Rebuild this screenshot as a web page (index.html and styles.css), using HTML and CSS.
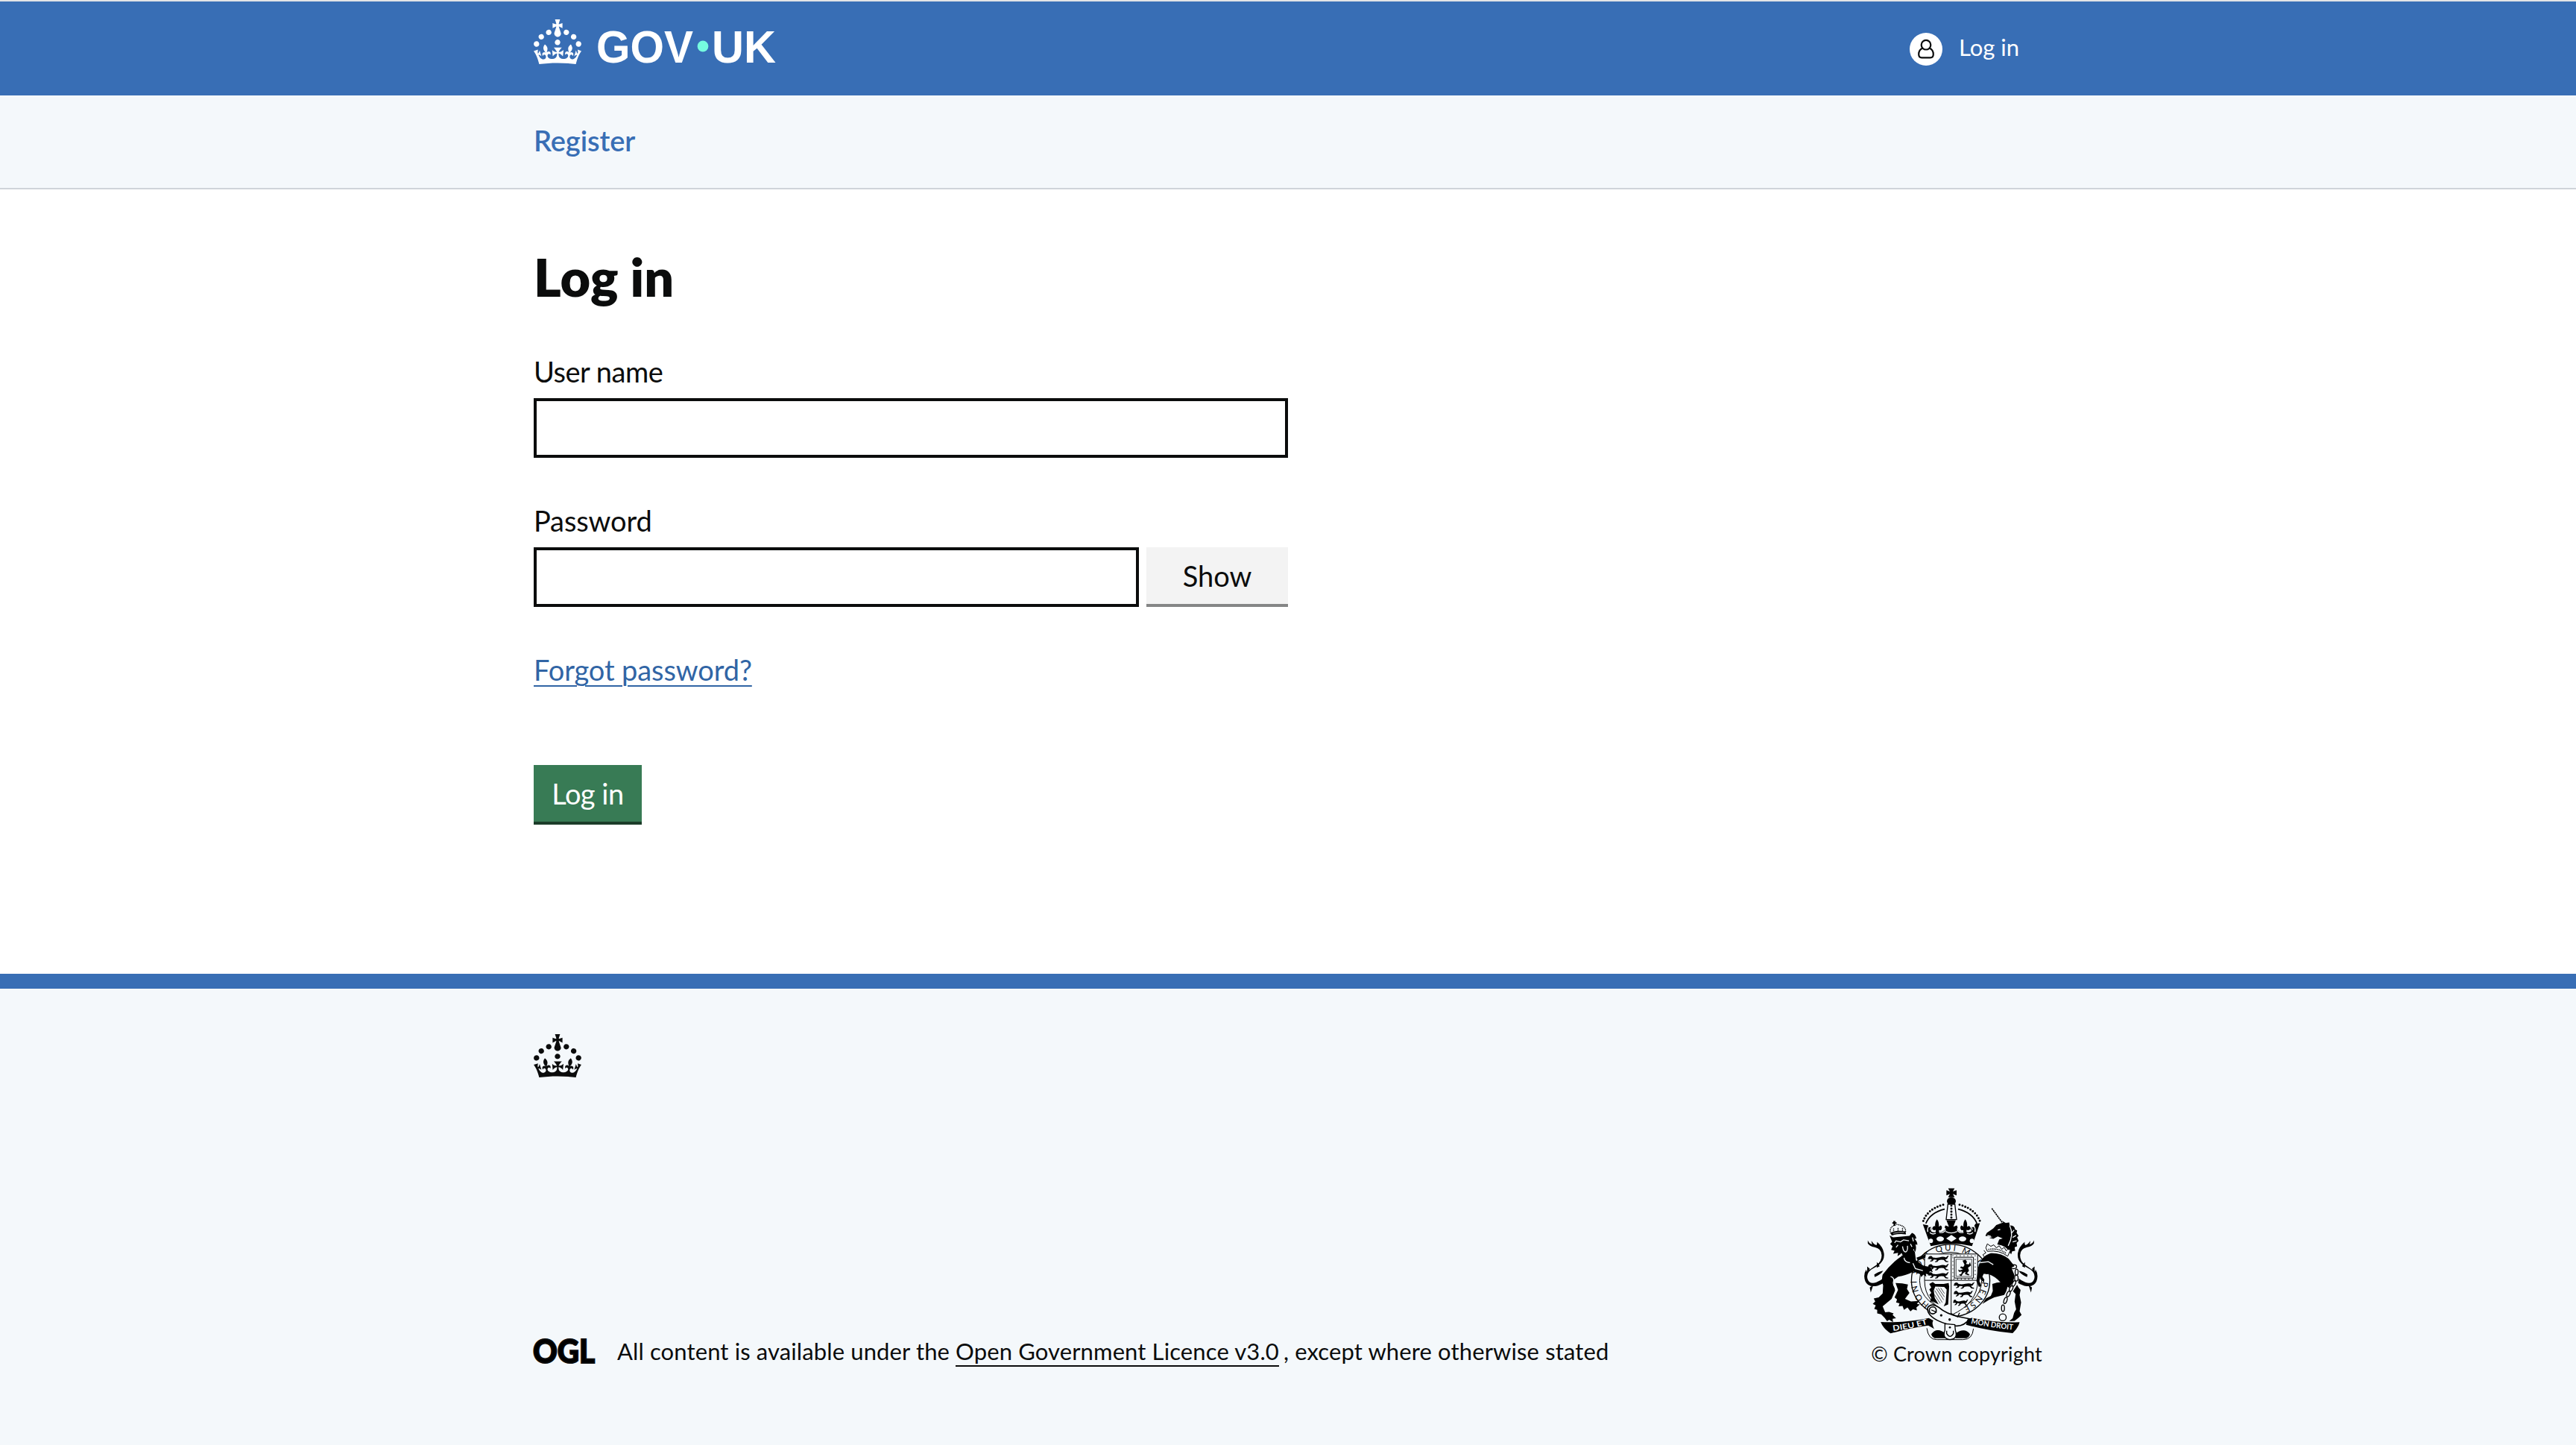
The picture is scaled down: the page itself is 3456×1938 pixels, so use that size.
FILE: index.html
```html
<!DOCTYPE html>
<html lang="en">
<head>
  <meta charset="UTF-8" />
  <meta name="viewport" content="width=device-width, initial-scale=1.0"/>
  <title>Log in - GOV.UK</title>
  <link rel="stylesheet" href="styles.css">
</head>
<body>
  <svg class="sprite" aria-hidden="true">
    <symbol id="crown" viewBox="0 0 32 30" preserveAspectRatio="none">
      <path d="M22.6 10.4c-1 .4-2-.1-2.4-1-.4-.9.1-2 1-2.4.9-.4 2 .1 2.4 1s-.1 2-1 2.4m-5.9 6.7c-.9.4-2-.1-2.4-1-.4-.9.1-2 1-2.4.9-.4 2 .1 2.4 1s-.1 2-1 2.4m10.8-3.7c-1 .4-2-.1-2.4-1-.4-.9.1-2 1-2.4.9-.4 2 .1 2.4 1s0 2-1 2.4m3.3 4.8c-1 .4-2-.1-2.4-1-.4-.9.1-2 1-2.4.9-.4 2 .1 2.4 1s-.1 2-1 2.4M17 4.7l2.3 1.2V2.5l-2.3.7-.2-.2.9-3h-3.4l.9 3-.2.2c-.1.1-2.3-.7-2.3-.7v3.4L15 4.7c.1.1.1.2.2.2l-1.3 4c-.1.2-.1.4-.1.6 0 1.1.8 2 1.9 2.2h.7c1-.2 1.9-1.1 1.9-2.1 0-.2 0-.4-.1-.6l-1.3-4c-.1-.2 0-.2.1-.3m-7.6 5.7c.9.4 2-.1 2.4-1 .4-.9-.1-2-1-2.4-.9-.4-2 .1-2.4 1s0 2 1 2.4m-5 3c.9.4 2-.1 2.4-1 .4-.9-.1-2-1-2.4-.9-.4-2 .1-2.4 1s.1 2 1 2.4m-3.2 4.8c.9.4 2-.1 2.4-1 .4-.9-.1-2-1-2.4-.9-.4-2 .1-2.4 1s0 2 1 2.4m14.8 11c4.4 0 8.6.3 12.3.8 1.1-4.5 2.4-7 3.7-8.8l-2.5-.9c.2 1.3.3 1.9 0 2.7-.4-.4-.8-1.1-1.1-2.3l-1.2 4c.7-.5 1.3-.8 2-.9-1.1 2.5-2.6 3.1-3.5 3-1.1-.2-1.7-1.2-1.5-2.1.3-1.2 1.5-1.5 2.1-.1 1.1-2.3-.8-3-2-2.3 1.9-1.9 2.1-3.5.6-5.6-2.1 1.6-2.1 3.2-1.2 5.5-1.2-1.4-3.2-.6-2.5 1.6.9-1.4 2.1-.5 1.9.8-.2 1.1-1.7 2.1-3.5 1.9-2.7-.2-2.9-2.1-2.9-3.6.7-.1 1.9.5 2.9 1.9l.4-4.3c-1.1 1.1-2.1 1.4-3.2 1.4.4-1.2 2.1-3 2.1-3h-5.4s1.7 1.9 2.1 3c-1.1 0-2.1-.2-3.2-1.4l.4 4.3c1-1.4 2.2-2 2.9-1.9-.1 1.5-.2 3.4-2.9 3.6-1.9.2-3.4-.8-3.5-1.9-.2-1.3 1-2.2 1.9-.8.7-2.3-1.2-3-2.5-1.6.9-2.2.9-3.9-1.2-5.5-1.5 2-1.3 3.7.6 5.6-1.2-.7-3.1 0-2 2.3.6-1.4 1.8-1.1 2.1.1.2.9-.3 1.9-1.5 2.1-.9.2-2.4-.5-3.5-3 .6 0 1.2.3 2 .9l-1.2-4c-.3 1.1-.7 1.9-1.1 2.3-.3-.8-.2-1.4 0-2.7l-2.9.9C1.3 23 2.6 25.5 3.7 30c3.7-.5 7.9-.8 12.3-.8"/>
    </symbol>
  </svg>

  <header class="header">
    <div class="container header-row">
      <a class="logo" href="#" aria-label="GOV.UK">
        <svg class="logo-crown"><use href="#crown"/></svg>
        <svg class="wordmark" viewBox="0 0 242 60">
          <text x="0" y="58" textLength="130" lengthAdjust="spacingAndGlyphs">GOV</text>
          <circle cx="143" cy="36" r="7.4"/>
          <text x="155" y="58" textLength="86" lengthAdjust="spacingAndGlyphs">UK</text>
        </svg>
      </a>
      <a class="account" href="#">
        <svg class="account-icon" viewBox="0 0 44 44">
          <circle class="disc" cx="22" cy="22" r="22"/>
          <path d="M17.5 20.5c-3.600 1.600-5.300 4.500-5.300 8.200 0 3 1.300 4.600 4 4.600h11.600c2.700 0 4-1.600 4-4.600 0-3.700-1.700-6.600-5.300-8.200"/>
          <circle class="head" cx="22" cy="16.200" r="6.300"/>
        </svg>
        <span class="account-text">Log in</span>
      </a>
    </div>
  </header>

  <nav class="nav">
    <div class="container">
      <a class="nav-link" href="#">Register</a>
    </div>
  </nav>

  <main class="container main">
    <h1 class="title">Log in</h1>
    <form class="login-form">
      <label class="label" for="username">User name</label>
      <input class="input" id="username" type="text">
      <label class="label" for="password">Password</label>
      <div class="password-row">
        <input class="input" id="password" type="password">
        <button class="btn btn-secondary" type="button">Show</button>
      </div>
      <p class="forgot"><a class="link" href="#">Forgot password?</a></p>
      <button class="btn btn-primary" type="button">Log in</button>
    </form>
  </main>

  <footer class="footer">
    <div class="container">
      <svg class="footer-crown"><use href="#crown"/></svg>
      <div class="footer-row">
        <div class="licence">
          <svg class="ogl" viewBox="0 0 82 34">
            <text x="-1" y="33" textLength="83" lengthAdjust="spacingAndGlyphs">OGL</text>
          </svg>
          <p class="licence-text">All content is available under the <a class="licence-link" href="#">Open Government Licence v3.0</a><span class="tail-text">, except where otherwise stated</span></p>
        </div>
        <a class="copyright" href="#">
          <svg class="crest" viewBox="87 70 702 616">
            <defs>
              <path id="ring" d="M352 540A132 121 0 1 1 440 565"/>
              <path id="motto-left" d="M206 647Q280 638 350 618"/>
              <path id="motto-right" d="M519 617Q600 634 692 643"/>
              <g id="passant">
                <path d="M4 6q6-8 14-4l4 5q14 3 28-1 14-4 26 1l4-6 3 3-3 8-8 3 6 6 6 1v4l-10-1-8-8q-12-2-20 1l-6 7-9 1v-3l6-2 1-5-12-1-4 6-10 3v-4l6-2-2-5-10 1z"/>
                <path class="line3" d="M78 8q8-4 6-8M2 12l6-2"/>
              </g>
              <g id="tail">
                <path d="M104 282q6 14 18 16-4-8-3-14 8 14 20 17 4-6 2-13 24 20 28 45 4 26-16 44-18 14-34 22-22 16-16 38 8 24 36 14 32-14 62-50l12 12q-38 44-70 52-38 8-49-18-10-26 4-48 0 6 3 10 2-18 0-22 8 8 9 14 14-10 30-21 20-13 20-38 0-26-28-32-22-4-28-16z"/>
                <path d="M130 420q12-10 36-16-8 14-34 26zM112 396l-10-8 4 22zM126 462l-10 30-4-20zM140 392q2-14 0-22 10 8 12 16z"/>
              </g>
            </defs>

            <!-- supporters' tails -->
            <use href="#tail"/>
            <use href="#tail" transform="matrix(-1 0 0 1 878 0)"/>

            <!-- garter -->
            <ellipse class="paper line4" cx="438" cy="444" rx="158" ry="146"/>
            <ellipse class="paper line3" cx="438" cy="444" rx="125" ry="114"/>
            <text class="garter-text"><textPath href="#ring" textLength="650">HONI SOIT QUI MAL Y PENSE</textPath></text>

            <!-- crown -->
            <path d="M428 72h26l-7 13 15-5v21l-15-6 7 13h-26l7-13-14 6V80l14 5z"/>
            <ellipse cx="441" cy="124" rx="18" ry="16"/>
            <path class="paper line4" d="M427 136h28l7 62h-42z"/>
            <path class="beads" d="M441 142v50"/>
            <path class="beads" d="M408 138Q340 158 326 210M474 138Q542 158 558 210"/>
            <path class="line5" d="M414 156Q356 170 338 214M468 156Q526 170 544 214"/>
            <path d="M326 217l20 4 6 8 8-1q4 8-2 16 10 9 20 4v-8q-10 4-14-4 0-10 10-12l2 3q-3-16 7-30 10 14 7 30l8-5q8 6 3 16-6 6-10 2v8q14 2 24-8-4-10 2-18l14 5-10-26h38l-10 26 14-5q6 8 2 18 10 10 24 8v-8q-4 4-10-2-5-10 3-16l8 5q-3-16 7-30 10 14 7 30l8-3q8 4 6 12-6 8-16 4v8q12 4 20-4-6-8-2-16l10 1 8-14 18-2-24 70-8 22q-82-20-166 0l-8-22z"/>
            <path class="cut" d="M350 224q-8 12-4 24M354 250q8 10 24 4M392 250q16 4 26-10M532 224q8 12 4 24M528 250q-8 10-24 4M490 250q-16 4-26-10M362 226l-6 14M520 226l6 14M406 224l12 14M476 224l-12 14"/>
            <path class="paper" d="M441 260l21 14-21 14-21-14z"/>
            <ellipse class="paper" cx="396" cy="276" rx="15" ry="10"/>
            <ellipse class="paper" cx="486" cy="276" rx="15" ry="10"/>
            <circle class="paper" cx="358" cy="284" r="9"/>
            <circle class="paper" cx="524" cy="284" r="9"/>
            <path class="cut" d="M418 246q22 12 46 0"/>

            <!-- shield -->
            <path class="paper line3" d="M333 337h214v108q0 90-106 138-108-48-108-138z"/>
            <path class="line3" d="M440 337v245M333 443h214"/>
            <use href="#passant" x="344" y="344"/>
            <use href="#passant" x="344" y="377"/>
            <use href="#passant" x="344" y="410"/>
            <path class="line3" d="M453 350h77v84h-77z"/>
            <path class="line2" d="M460 358h63v69h-63z"/>
            <path class="dots" d="M447 344h90v94h-90z"/>
            <path d="M486 364l12-4 6 8-4 9 12 2 4-10 4 14-12 9 4 12-8 10 10 6-4 3-14-5 2-10-9 6-8 12-10-5 10-4 3-10-12 2-4-9 8 3 12-5-12-6 4-5 9 2 5-9z"/>
            <use href="#passant" x="448" y="451"/>
            <use href="#passant" transform="translate(448 485) scale(.92 1)"/>
            <use href="#passant" transform="translate(446 520) scale(.72 1)"/>
            <path d="M352 458l14-8 10 8h34l20-4 2 14-4 72-18 8 8-16 4-52-10-10-36-2-6 16 4 30 16 26-24-12-12 2 6-16-8-12 8-8-8-14 8-8z"/>
            <path class="line2" d="M374 484l30 48M380 476l30 46M388 474l25 36M398 474l15 22M372 500l24 36"/>

            <!-- belt and buckle -->
            <path class="paper line5" d="M346 552q16-20 44 0 30 26 82 38l42 8q-24 34-62 28-70-14-96-42-14-16-10-32z"/>
            <circle class="paper line5" cx="366" cy="564" r="14"/>
            <circle cx="400" cy="584" r="5"/>
            <circle cx="434" cy="601" r="5"/>
            <path class="line4" d="M438 576l28 14 8-16M360 562l22 10"/>
            <path class="line3" d="M342 636q6 46 40 46h106q38 0 42-44"/>
            <path d="M360 660q18-24 42-12l16 8v20h-44q-12-4-14-16zM516 660q-16-22-42-12l-16 8v20h44q12-4 14-16z"/>
            <path class="paper line4" d="M415 618l40 4 2 22q12 36-22 38-32-4-20-38z"/>
            <path class="line4" d="M422 646v12q14 22 27 0v-12"/>
            <circle cx="435" cy="633" r="4"/>

            <!-- lion -->
            <path d="M192 262l14 8 66-6 10-12q14 4 18 22l-8 2q12 10 12 24l-8-2q6 16-2 32l-6-8q-2 16-12 24l-6-10-10 20-6-14-10 14-6-20-14 10 2-14-20 4 6-12-14-4 6-14-10-10 8-8z"/>
            <path class="cut" d="M216 284l20 4 12-8 22 4M244 306q4 26 14 22 8-4 6-24M226 300l-8 10M276 296l6 12M238 334l8 14M212 292l6-8M284 270l4 16M288 318l4 14"/>
            <path class="beads-fine" d="M196 252q-8-26 26-34 38 6 34 30M208 250v-16M244 248v-16M226 248v-18"/>
            <path d="M207 204h8v5h5v6h-5v8h-7v-8h-5v-6h4zM196 250q28-10 60-4l2 12q-30-4-58 4z"/>
            <path class="cut-fine" d="M206 254q24-6 44-4"/>
            <path d="M242 344q-44 30-78 76-6 20 2 44l-2 32-16 16-20 4 6 12-10 10 12 6-6 14 12 4v14l16 4 14 14 10 14 8-6 16 10-2-14 14-2-14-14 4-6-18-6-16 2-10-24 36-30 14-34-8-42 20-14q32-4 62-20l26 10 6 12 8-10 12 8-2-12 12 4 4-14 12 4-8-20-30-6-30-22-4-32-14-20-10 14z"/>
            <path d="M300 352l38-14-2 14-30 12z"/>
            <path d="M216 454q28 0 50 6l-4 18 10 16-18 24 24 10 34-2-10 12 12 2-14 12 2 12-16-4-10 8-12-16-14 10-6-16-16 2 4-12-14-4 4-12-10-8 14-30z"/>
            <path class="cut" d="M196 428q16 4 12 20-4 10 6 24M286 374l10 22 30 8M250 352q2 18 24 20"/>

            <!-- unicorn -->
            <path class="horn" d="M604 153l42 57"/>
            <path d="M578 264l6-12 26-18 12-14 28-10-6-8 16 10 14-2 2 12q20 0 22 16l8 4-2 10 8 12-6 6 6 14-8 8 2 14-10 4 2 14-12 2-4 12-10-12q-8-22-46-28l8-20 14-4-20-8-18 10-16-4 14-4z"/>
            <path class="cut" d="M676 222q18 38-6 82M694 240l-10 12M702 262l-14 8M704 284l-16 4M628 240l10-2M586 262l14 4"/>
            <path class="paper line3" d="M586 296l-6 16 6 14q50-6 82 20l12-26-12-2-6 6-8-14-10 8-10-14-12 8-10-12-12 6z"/>
            <path class="beads-fine" d="M592 318q40-6 72 18"/>
            <path d="M548 396q10-50 52-62 40-2 72 22l22 28q12 22 6 56 2 22 20 42l-4 20 6 30-6 36 8 14-10 10-18 14-22 2 14-12 6-22 8-14-6-32 4-30-22-22-38-24q-24-26-50-34l-30-2-6 30 8 20-10 4-10-24z"/>
            <path d="M560 384l-10 30 8 24 14 14 2-12-8-12 8-18 20-18zM606 458q30-14 66-4l-10 34-8 14-40 10-22 10-26 16 14-22 20-10 8-20z"/>
            <path class="cut" d="M556 372l34-4 20 12M566 350l10-8"/>
            <path class="line3" d="M572 322l8 10-12 8 10 14"/>
            <g class="chain-gap">
              <path d="M692 388l14 34-6 30-30 46-20 50v24"/>
            </g>
            <g class="chain">
              <ellipse cx="692" cy="388" rx="12" ry="8"/>
              <ellipse cx="704" cy="410" rx="6" ry="12"/>
              <ellipse cx="703" cy="434" rx="7" ry="12"/>
              <ellipse cx="693" cy="456" rx="6" ry="12" transform="rotate(25 693 456)"/>
              <ellipse cx="682" cy="476" rx="6" ry="12" transform="rotate(25 682 476)"/>
              <ellipse cx="671" cy="498" rx="6" ry="12" transform="rotate(25 671 498)"/>
              <ellipse cx="659" cy="524" rx="6" ry="13" transform="rotate(20 659 524)"/>
              <ellipse cx="649" cy="555" rx="6" ry="13"/>
              <circle cx="648" cy="592" r="14"/>
            </g>

            <!-- motto scroll -->
            <path d="M156 611q100 4 194-16l18 10q-8 12 4 34l-24-14q-72 10-152 32-30-20-40-46z"/>
            <path d="M522 594q96 20 194 18-6 24-28 44-90-8-188-34l6-22z"/>
            <text class="motto"><textPath href="#motto-left" textLength="142" lengthAdjust="spacingAndGlyphs">DIEU ET</textPath></text>
            <text class="motto"><textPath href="#motto-right" textLength="172" lengthAdjust="spacingAndGlyphs">MON DROIT</textPath></text>
          </svg>
          <span class="copyright-text">© Crown copyright</span>
        </a>
      </div>
    </div>
  </footer>
</body>
</html>
```
FILE: styles.css
```css
* {
  box-sizing: border-box;
}

body {
  margin: 0;
  min-height: 1938px;
  display: flex;
  flex-direction: column;
  font-family: Lato, "Noto Sans", sans-serif;
  font-size: 38px;
  color: #0b0c0c;
  background: #fff;
}

a {
  color: inherit;
  text-decoration: none;
}

.sprite {
  position: absolute;
  width: 0;
  height: 0;
}

.container {
  width: 2024px;
  margin: 0 auto;
}

/* header */
.header {
  height: 128px;
  border-top: 2px solid #e2e4e6;
  background: #386eb5;
  color: #fff;
}

.header-row {
  display: flex;
  justify-content: space-between;
  padding-right: 31px;
}

.logo {
  display: flex;
  gap: 20px;
  padding-top: 24px;
}

.logo-crown {
  width: 64px;
  height: 60px;
  fill: #fff;
}

.wordmark {
  width: 242px;
  height: 60px;
  overflow: visible;
  fill: #fff;
  font-family: "Liberation Sans", Arial, sans-serif;
  font-size: 62px;
  font-weight: bold;
}

.wordmark circle {
  fill: #76fbe0;
}

.account {
  display: flex;
  gap: 22px;
  padding-top: 42px;
  font-size: 31px;
}

.account-icon {
  width: 44px;
  height: 44px;
  fill: #fff;
  stroke: #0b0c0c;
  stroke-width: 2.2;
}

.account-icon .disc {
  stroke: none;
}

.account-text {
  line-height: 38px;
}

/* navigation */
.nav {
  height: 126px;
  border-bottom: 2px solid #cfd4d9;
  background: #f4f8fb;
}

.nav-link {
  color: #386eb5;
  font-weight: 600;
  line-height: 121px;
  letter-spacing: -0.1px;
}

/* form */
.main {
  padding-top: 77px;
}

.title {
  margin: 0 0 62px;
  font-size: 70px;
  font-weight: 800;
  line-height: 80px;
}

.login-form {
  width: 1012px;
}

.label {
  display: block;
  margin-bottom: 11px;
  line-height: 50px;
  letter-spacing: -0.5px;
}

.input {
  display: block;
  width: 100%;
  height: 80px;
  margin: 0 0 59px;
  padding: 10px;
  border: 4px solid #0b0c0c;
  border-radius: 0;
  background: #fff;
  font: inherit;
}

.input + .label {
  letter-spacing: -0.1px;
}

.password-row {
  display: flex;
  gap: 10px;
  margin-bottom: 59px;
}

.password-row .input {
  flex: 1;
  margin: 0;
}

.btn {
  height: 80px;
  padding: 0;
  border: 0;
  border-bottom: 4px solid;
  font: inherit;
}

.btn-secondary {
  width: 190px;
  border-color: #858686;
  background: #f3f3f3;
  color: #0b0c0c;
}

.btn-primary {
  width: 145px;
  border-color: #1c3d2a;
  background: #387b55;
  color: #fff;
  letter-spacing: -0.5px;
}

.forgot {
  margin: 0 0 103px;
  line-height: 50px;
  letter-spacing: -0.1px;
}

.link {
  color: #3165a5;
  text-decoration: underline;
  text-decoration-thickness: 2px;
  text-underline-offset: 6px;
}

/* footer */
.footer {
  flex: 1;
  margin-top: 200px;
  padding-top: 61px;
  border-top: 20px solid #386eb5;
  background: #f4f8fb;
}

.footer-crown {
  display: block;
  width: 64px;
  height: 58px;
  fill: #0b0c0c;
}

.footer-row {
  display: flex;
  justify-content: space-between;
  align-items: flex-end;
  margin-top: 148px;
}

.licence {
  display: flex;
  align-items: center;
  gap: 30px;
  padding-bottom: 2px;
  font-size: 31px;
  letter-spacing: 0.12px;
}

.ogl {
  width: 82px;
  height: 34px;
  overflow: visible;
  font-size: 44px;
  font-weight: 900;
  letter-spacing: 0;
  stroke: #0b0c0c;
  stroke-width: 2;
}

.licence-text {
  margin: 0;
  line-height: 40px;
}

.licence-link {
  border-bottom: 2px solid #0b0c0c;
}

.tail-text {
  margin-left: 6px;
}

.copyright {
  display: flex;
  flex-direction: column;
  font-size: 27px;
  line-height: 36px;
  letter-spacing: 0.2px;
}

.crest {
  width: 234px;
  height: 205px;
  margin-left: -10px;
}

/* crest line work */
.crest .paper {
  fill: #f4f8fb;
}

.crest .line2,
.crest .line3,
.crest .line4,
.crest .line5 {
  stroke: #000;
  stroke-width: 2;
}

.crest .line2:not(.paper),
.crest .line3:not(.paper),
.crest .line4:not(.paper),
.crest .line5:not(.paper) {
  fill: none;
}

.crest .line3 {
  stroke-width: 3;
}

.crest .line4 {
  stroke-width: 4;
}

.crest .line5 {
  stroke-width: 5;
}

.crest .beads,
.crest .beads-fine,
.crest .dots {
  fill: none;
  stroke: #000;
  stroke-linecap: round;
  stroke-width: 9;
  stroke-dasharray: 0 12;
}

.crest .beads-fine {
  stroke-width: 5;
  stroke-dasharray: 0 7;
}

.crest .dots {
  stroke-width: 4;
  stroke-dasharray: 0 15;
}

.crest .cut,
.crest .cut-fine {
  fill: none;
  stroke: #f4f8fb;
  stroke-width: 4;
}

.crest .cut-fine {
  stroke-width: 2;
}

.crest .horn {
  stroke: #000;
  stroke-width: 5;
  stroke-dasharray: 7 2;
}

.crest .chain-gap {
  fill: none;
  stroke: #f4f8fb;
  stroke-width: 20;
}

.crest .chain {
  fill: none;
  stroke: #000;
  stroke-width: 4;
}

.garter-text {
  font-size: 34px;
}

.motto {
  fill: #f4f8fb;
  font-size: 31px;
  font-weight: bold;
}
```
